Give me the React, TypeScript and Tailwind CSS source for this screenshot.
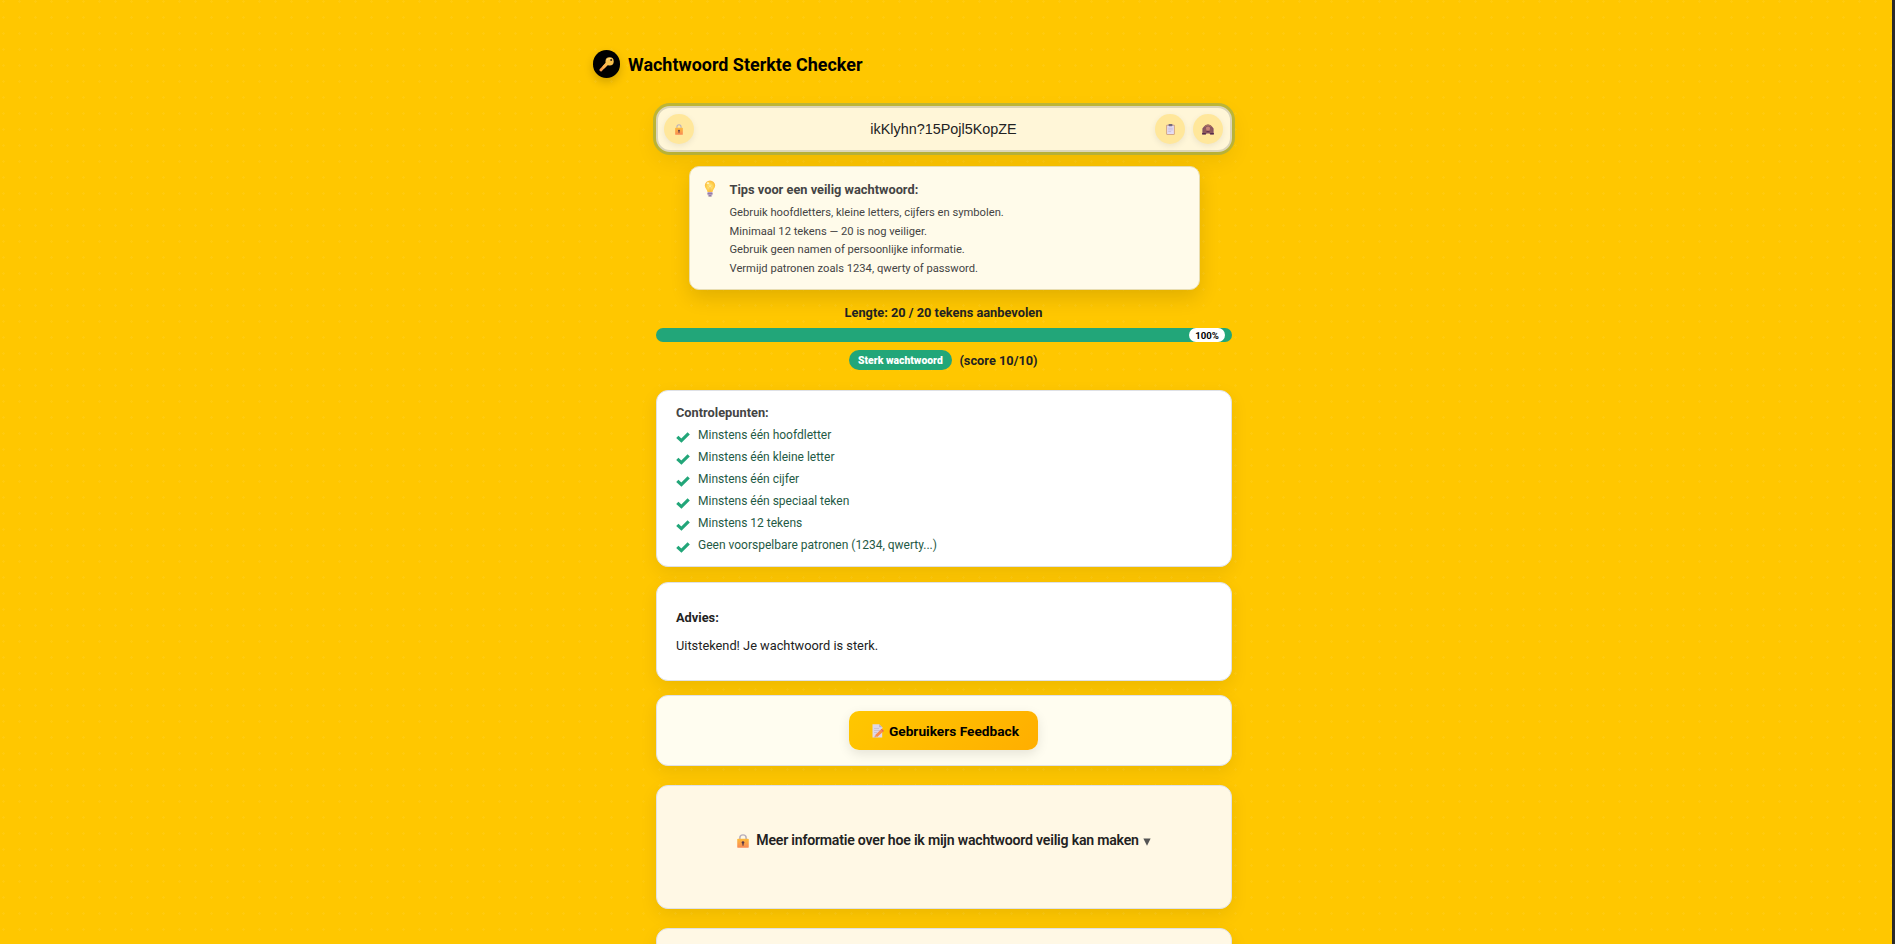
import React from "react";

const CARD =
  "box-border w-[576px] shrink-0 rounded-[12px] border border-[#dfe1e6] shadow-[0_6px_18px_rgba(0,0,0,0.08)]";

function KeyIcon() {
  return (
    <svg width="15" height="15" viewBox="0 0 15 15">
      <path d="M1.9 13 L8 6.6" stroke="#f59a4a" strokeWidth="2.8" strokeLinecap="round" />
      <path d="M5 9.8 L8 6.6" stroke="#fbb450" strokeWidth="3" strokeLinecap="round" />
      <circle cx="10.6" cy="4.4" r="4.1" fill="#f9c24e" />
      <path d="M8 3 A4 4 0 0 1 12 1.6" stroke="#ffe08a" strokeWidth="1" fill="none" />
      <circle cx="12.2" cy="3" r="1" fill="#3a2a14" />
    </svg>
  );
}

function LockIcon({ className }: { className: string }) {
  return (
    <svg className={className} viewBox="0 0 10 13" preserveAspectRatio="none">
      <defs>
        <linearGradient id="lockBody" x1="0" y1="0" x2="0" y2="1">
          <stop offset="0" stopColor="#fdbb3c" />
          <stop offset="1" stopColor="#f98a55" />
        </linearGradient>
      </defs>
      <path d="M2.4 6 V3.4 a2.6 2.6 0 0 1 5.2 0 V6" fill="none" stroke="#b9b0bd" strokeWidth="1.3" />
      <rect x="0.2" y="4.4" width="9.6" height="8.4" rx="0.8" fill="url(#lockBody)" />
      <circle cx="5" cy="7.8" r="1.1" fill="#55364a" />
      <rect x="4.5" y="8" width="1" height="2.8" fill="#55364a" />
    </svg>
  );
}

function ClipboardIcon() {
  return (
    <svg width="9" height="11" viewBox="0 0 9 11">
      <rect x="0.3" y="0.8" width="8.4" height="10" rx="0.7" fill="#c79582" />
      <rect x="1.1" y="1.6" width="6.8" height="8.4" fill="#e4ddf3" />
      <rect x="2.6" y="0" width="3.8" height="2.2" rx="0.6" fill="#75697f" />
      <path d="M2.2 4.2h4.6M2.2 5.9h4.6M2.2 7.6h3" stroke="#bdb3d3" strokeWidth="0.7" />
    </svg>
  );
}

function MonkeyIcon() {
  return (
    <svg width="12" height="11" viewBox="0 0 12 11">
      <path d="M2 2.6 Q3.4 0.6 6 0.6 T10 2.6 L11.6 4.6 V8.4 L12 10.4 H8.2 L7.6 9.4 H4.4 L3.8 10.4 H0 L0.4 8.4 V4.6 Z" fill="#875162" />
      <path d="M2.6 2.8 Q6 -0.4 9.4 2.8" stroke="#a9745f" strokeWidth="1.2" fill="none" />
      <ellipse cx="6" cy="4.9" rx="2.2" ry="2.4" fill="#c88578" />
      <path d="M2.2 3.6 L4 4.4 L4.9 8.6 L3.6 10.2 H1 Z M9.8 3.6 L8 4.4 L7.1 8.6 L8.4 10.2 H11 Z" fill="#8d5a5c" />
      <path d="M4.6 7.6 Q6 6.6 7.4 7.6" stroke="#5e2c4a" strokeWidth="1" fill="none" />
      <path d="M0.2 9.7H3.8M8.2 9.7H11.8" stroke="#542c4b" strokeWidth="1.2" />
    </svg>
  );
}

function BulbIcon() {
  return (
    <svg className="shrink-0" width="12" height="17" viewBox="0 0 12 17">
      <defs>
        <radialGradient id="bulbGlass" cx="0.5" cy="0.55" r="0.6">
          <stop offset="0" stopColor="#fff0a0" />
          <stop offset="0.5" stopColor="#ffd34f" />
          <stop offset="1" stopColor="#fbb43a" />
        </radialGradient>
      </defs>
      <path d="M6 0.4 A5.2 5.2 0 0 1 11.2 5.6 C11.2 8.2 8.8 9.4 8.5 12 H3.5 C3.2 9.4 0.8 8.2 0.8 5.6 A5.2 5.2 0 0 1 6 0.4Z" fill="url(#bulbGlass)" />
      <path d="M4.4 6.4 L5.3 7.4 V11.6 M7.6 6.4 L6.7 7.4 V11.6" stroke="#f5ab3c" strokeWidth="0.5" fill="none" />
      <ellipse cx="4" cy="3.2" rx="1.4" ry="1" fill="#fff3c0" />
      <rect x="3.5" y="12" width="5" height="3.3" rx="0.5" fill="#b8a0c6" />
      <path d="M3.5 13.6h5" stroke="#84709b" strokeWidth="0.8" />
      <rect x="4.4" y="15.2" width="3.2" height="1.2" rx="0.5" fill="#765e8a" />
    </svg>
  );
}

function MemoIcon() {
  return (
    <svg width="12" height="14" viewBox="0 0 12 14">
      <path d="M0.5 0.3 H7.2 L10.2 3.3 V13.6 H0.5 Z" fill="#dfd8e8" />
      <path d="M7.2 0.3 V3.3 H10.2 Z" fill="#b9aec6" />
      <path d="M2 4.5h5M2 6.5h6M2 8.5h3" stroke="#c3b9cf" strokeWidth="0.7" />
      <path d="M3 11.2 L8.6 5.8 L10.8 8 L5.2 13 Z" fill="#fb8c4c" />
      <path d="M8.6 5.8 L9.8 4.7 L12 6.9 L10.8 8 Z" fill="#f0644f" />
      <path d="M3 11.2 L5.2 13 L2.2 13.6 Z" fill="#d9a184" />
    </svg>
  );
}

function CheckIcon() {
  return (
    <svg className="mt-[4px] shrink-0" width="14" height="12" viewBox="0 0 14 12">
      <path d="M1.3 5.8 L5.4 9.6 L12.7 2.4" fill="none" stroke="#22a679" strokeWidth="3.2" />
    </svg>
  );
}

const ROUND =
  "flex h-[30px] w-[30px] items-center justify-center rounded-full bg-[#ffe79b] shadow-[0_2px_6px_rgba(0,0,0,0.08)]";

const tips = [
  "Gebruik hoofdletters, kleine letters, cijfers en symbolen.",
  "Minimaal 12 tekens — 20 is nog veiliger.",
  "Gebruik geen namen of persoonlijke informatie.",
  "Vermijd patronen zoals 1234, qwerty of password.",
];

const checks = [
  "Minstens één hoofdletter",
  "Minstens één kleine letter",
  "Minstens één cijfer",
  "Minstens één speciaal teken",
  "Minstens 12 tekens",
  "Geen voorspelbare patronen (1234, qwerty...)",
];

export default function App() {
  return (
    <div className="flex h-[944px] w-full overflow-hidden bg-[#ffc700] font-[Roboto,sans-serif] text-[#222]">
      <div className="flex min-w-0 flex-1 justify-center bg-[radial-gradient(circle_at_3.5px_1.5px,rgba(255,255,255,0.06)_1px,transparent_1.5px)] bg-[size:16px_16px] pr-[4px]">
        <main className="flex h-[944px] w-[704px] flex-col items-center overflow-visible pt-[50px]">
          <header className="flex h-[28px] w-full shrink-0 items-center gap-[8px] pl-px">
            <div className="flex h-[28px] w-[27px] items-center justify-center rounded-full bg-black shadow-[0_4px_10px_rgba(0,0,0,0.18)]">
              <KeyIcon />
            </div>
            <h1 className="pt-px text-[17.95px] leading-[28px] font-bold text-black">Wachtwoord Sterkte Checker</h1>
          </header>

          <section className="mt-[28px] grid h-[46px] w-[576px] shrink-0 grid-cols-[1fr_auto_1fr] items-center rounded-[14px] border-2 border-[#dcd5b9] bg-[#fff6d8] pr-[7px] pl-[6px] shadow-[0_0_0_3px_rgba(100,160,130,0.42),0_8px_22px_rgba(0,0,0,0.08)]">
            <div className={ROUND}>
              <LockIcon className="h-[11px] w-[8px]" />
            </div>
            <span className="font-['Liberation_Sans',sans-serif] text-[14.4px] leading-[20px] text-[#222]">ikKlyhn?15Pojl5KopZE</span>
            <div className="flex justify-end gap-[8px]">
              <div className={ROUND}>
                <ClipboardIcon />
              </div>
              <div className={ROUND}>
                <MonkeyIcon />
              </div>
            </div>
          </section>

          <section className="mt-[14px] flex h-[124px] w-[511px] shrink-0 gap-[14px] rounded-[10px] border border-[#e8ddb0] bg-[#fffbea] pt-[13px] pl-[14px] shadow-[0_8px_20px_rgba(0,0,0,0.12)]">
            <BulbIcon />
            <div>
              <h2 className="text-[12.8px] leading-[20px] font-bold text-[#444]">Tips voor een veilig wachtwoord:</h2>
              <ul className="mt-[4px] text-[11.2px] leading-[18.7px] text-[#444]">
                {tips.map((t) => (
                  <li key={t}>{t}</li>
                ))}
              </ul>
            </div>
          </section>

          <p className="mt-[13px] shrink-0 pr-px text-[12.8px] leading-[20px] font-bold text-[#222]">Lengte: 20 / 20 tekens aanbevolen</p>
          <div className="mt-[5px] flex h-[14px] w-[576px] shrink-0 justify-end rounded-full bg-[#22a679] pr-[7px]">
            <span className="flex h-[14px] w-[36px] items-center justify-center rounded-full bg-white pt-[2px] text-[9.6px] font-bold text-black">100%</span>
          </div>
          <div className="mt-[8px] flex h-[20px] shrink-0 items-center gap-[7px] pr-px">
            <span className="flex h-[20px] w-[103px] items-center justify-center rounded-full bg-[#22a679] pt-px pr-px text-[10.4px] font-black text-white">Sterk wachtwoord</span>
            <span className="pt-px text-[12.8px] font-bold text-[#222]">(score 10/10)</span>
          </div>

          <section className={`${CARD} mt-[20px] h-[177px] bg-white pt-[12px] pl-[19px]`}>
            <h2 className="text-[12.8px] leading-[20px] font-bold text-[#444]">Controlepunten:</h2>
            <ul className="mt-px text-[12px] leading-[22px] text-[#1f5a45]">
              {checks.map((c) => (
                <li key={c} className="flex h-[22px] items-center gap-[8px]">
                  <CheckIcon />
                  <span>{c}</span>
                </li>
              ))}
            </ul>
          </section>

          <section className={`${CARD} mt-[15px] h-[99px] bg-white pt-[25px] pl-[19px] text-[12.8px] leading-[20px]`}>
            <h2 className="font-bold">Advies:</h2>
            <p className="mt-[8px]">Uitstekend! Je wachtwoord is sterk.</p>
          </section>

          <section className={`${CARD} mt-[14px] flex h-[71px] items-center justify-center bg-[#fffdf0] pr-[2px]`}>
            <button className="flex h-[39px] w-[189px] items-center justify-center gap-[5px] rounded-[10px] bg-linear-135 from-[#ffc700] to-[#ffae00] pt-px pl-[5px] text-[13.7px] font-bold text-black shadow-[0_4px_12px_rgba(0,0,0,0.1)]">
              <MemoIcon />
              <span>Gebruikers Feedback</span>
            </button>
          </section>

          <section className={`${CARD} mt-[19px] flex h-[124px] justify-center bg-[#fff8e5] pt-[43px]`}>
            <h2 className="flex h-[24px] items-center text-[14.1px] font-semibold tracking-[-0.21px] whitespace-nowrap">
              <LockIcon className="mr-[7px] h-[14px] w-[12px]" />
              <span>Meer informatie over hoe ik mijn wachtwoord veilig kan maken</span>
              <svg className="mt-[2px] ml-[4px]" width="8" height="8" viewBox="0 0 8 8">
                <path d="M0.4 0.4H7.6L4 7.8Z" fill="#555" />
              </svg>
            </h2>
          </section>

          <section className={`${CARD} mt-[19px] h-[124px] bg-[#fff8e5]`} />
        </main>
      </div>
      <aside className="w-[3px] bg-[#2b2b2b]" />
    </div>
  );
}
